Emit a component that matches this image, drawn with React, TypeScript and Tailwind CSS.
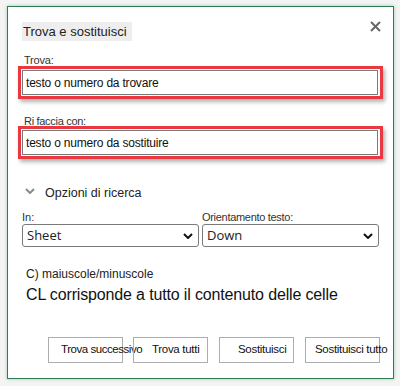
import React from "react";

const arial = { fontFamily: '"Liberation Sans", Arial, sans-serif' };

const Chevron = ({ className }: { className?: string }) => (
  <svg width="10" height="6" viewBox="0 0 10 6" className={className}>
    <path d="M1 1 L5 5 L9 1" fill="none" stroke="currentColor" strokeWidth="2" />
  </svg>
);

const RedInput = ({ value, className }: { value: string; className?: string }) => (
  <div
    className={`ml-[10px] w-[365px] border-[3px] border-[#e9383f] py-[1px] pl-[1px] pr-[2px] shadow-[2px_3px_4px_rgba(0,0,0,0.3)] ${className ?? ""}`}
  >
    <div className="flex h-[25px] items-center border border-[#7a7a7a] bg-white pl-[3px] text-[12px] tracking-[-0.2px] text-[#111]">
      {value}
    </div>
  </div>
);

const Select = ({ value }: { value: string }) => (
  <div className="flex h-[23px] w-[177px] items-center justify-between rounded-[3px] border border-[#7a7a7a] bg-white pl-[4px] pr-[5px]">
    <span className="text-[13px] text-[#222]" style={{ fontFamily: '"Open Sans", sans-serif' }}>
      {value}
    </span>
    <Chevron className="text-[#111]" />
  </div>
);

const Btn = ({ label, pad }: { label: string; pad: string }) => (
  <div
    className={`relative z-10 flex h-[26px] w-[75px] items-center overflow-visible whitespace-nowrap border border-[#adadad] bg-transparent text-[11.5px] text-[#111] ${pad}`}
  >
    {label}
  </div>
);

export default function App() {
  return (
    <div className="h-[386px] w-[400px] overflow-hidden bg-[#f3f4f3] pl-[7px] pt-[6px]" style={arial}>
      <div className="flex h-[373px] w-[387px] flex-col border border-[#2f7d52] bg-white shadow-[0_0_3px_rgba(70,160,110,0.5)]">
        {/* header */}
        <div className="flex items-start justify-between pl-[14px] pr-[12px] pt-[15px]">
          <div className="h-[19px] w-[110px] bg-[#eeeeee] px-[1px] text-[13px] leading-[19px] text-[#222]">
            Trova e sostituisci
          </div>
          <svg width="11" height="11" viewBox="0 0 11 11" className="mt-[-1px] text-[#666]">
            <path d="M1 1 L10 10 M10 1 L1 10" stroke="currentColor" strokeWidth="2" />
          </svg>
        </div>

        <div className="ml-[16px] mt-[13px] h-[12px] text-[11px] leading-[12px] tracking-[-0.2px] text-[#333]">
          Trova:
        </div>
        <RedInput value="testo o numero da trovare" />

        <div className="ml-[16px] mt-[16px] h-[12px] text-[11px] leading-[12px] tracking-[-0.3px] text-[#333]">
          Ri faccia con:
        </div>
        <RedInput value="testo o numero da sostituire" className="mt-[-1px]" />

        <div className="ml-[17px] mt-[26px] flex h-[16px] items-start">
          <Chevron className="mt-[3px] text-[#8a8a8a]" />
          <span className="ml-[10px] text-[12.5px] leading-[16px] text-[#222]">Opzioni di ricerca</span>
        </div>

        <div className="ml-[14px] mt-[10px] flex gap-[3px]">
          <div className="flex flex-col">
            <span className="h-[12px] text-[11px] leading-[12px] text-[#333]">In:</span>
            <div className="mt-[1px]">
              <Select value="Sheet" />
            </div>
          </div>
          <div className="flex flex-col">
            <span className="h-[12px] text-[11px] leading-[12px] tracking-[-0.3px] text-[#333]">
              Orientamento testo:
            </span>
            <div className="mt-[1px]">
              <Select value="Down" />
            </div>
          </div>
        </div>

        <div className="ml-[18px] mt-[20px] h-[14px] text-[12px] leading-[14px] text-[#222]">
          C) maiuscole/minuscole
        </div>
        <div className="ml-[18px] mt-[4px] h-[20px] whitespace-nowrap text-[16px] leading-[20px] tracking-[-0.15px] text-[#111]">
          CL corrisponde a tutto il contenuto delle celle
        </div>

        <div className="ml-[40px] mt-[32px] flex gap-[10px]">
          <Btn label="Trova successivo" pad="pl-[12px] tracking-[-0.45px]" />
          <Btn label="Trova tutti" pad="pl-[18px] tracking-[-0.3px]" />
          <div className="ml-[1px]">
            <Btn label="Sostituisci" pad="pl-[18px] tracking-[-0.3px]" />
          </div>
          <div className="ml-[1px]">
            <Btn label="Sostituisci tutto" pad="pl-[9px] tracking-[-0.3px]" />
          </div>
        </div>
      </div>
    </div>
  );
}
